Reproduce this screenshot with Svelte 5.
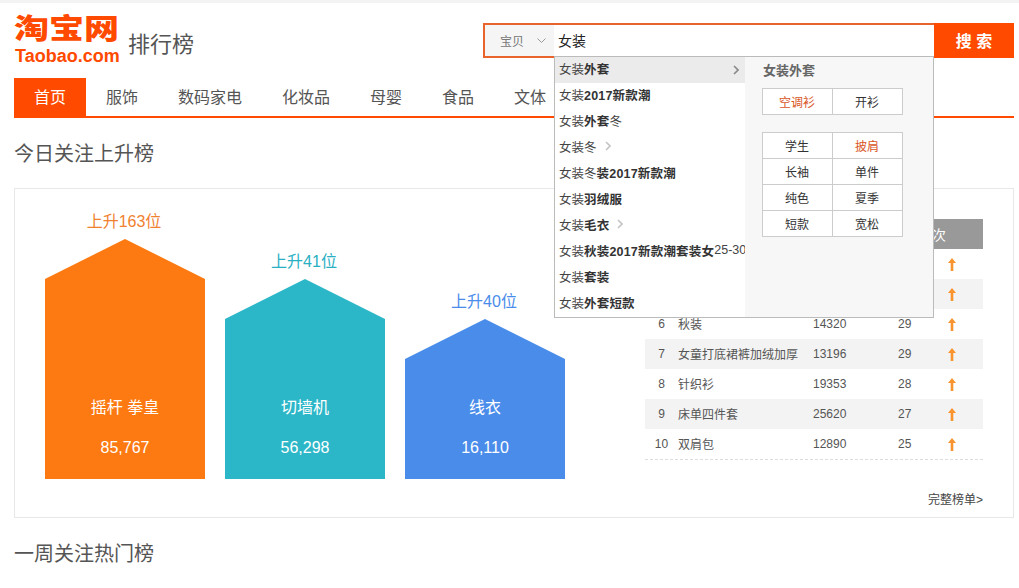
<script>
  const bars = [
    { rise: '上升163位', name: '摇杆 拳皇', value: '85,767', h: 240, bg: '#fd7a12', fg: '#f0812f' },
    { rise: '上升41位', name: '切墙机', value: '56,298', h: 200, bg: '#2cb7c9', fg: '#2ab0c3' },
    { rise: '上升40位', name: '线衣', value: '16,110', h: 160, bg: '#4a8cea', fg: '#4a8cea' }
  ];
  const rows = [
    { rank: '', name: '', num: '', up: '' },
    { rank: '', name: '', num: '', up: '' },
    { rank: 6, name: '秋装', num: '14320', up: 29 },
    { rank: 7, name: '女童打底裙裤加绒加厚', num: '13196', up: 29 },
    { rank: 8, name: '针织衫', num: '19353', up: 28 },
    { rank: 9, name: '床单四件套', num: '25620', up: 27 },
    { rank: 10, name: '双肩包', num: '12890', up: 25 }
  ];
  const nav = ['首页', '服饰', '数码家电', '化妆品', '母婴', '食品', '文体'];
  const sugg = [
    { a: '女装', b: '外套', c: '', hot: true },
    { a: '女装', b: '2017新款潮', c: '' },
    { a: '女装', b: '外套', c: '冬' },
    { a: '女装', b: '', c: '冬', more: true },
    { a: '女装', b: '', c: '冬', d: '装2017新款潮' },
    { a: '女装', b: '羽绒服', c: '' },
    { a: '女装', b: '毛衣', c: '', more: true },
    { a: '女装', b: '秋装2017新款潮套装女', c: '25-30' },
    { a: '女装', b: '套装', c: '' },
    { a: '女装', b: '外套短款', c: '' }
  ];
  const g1 = [{ t: '空调衫', on: true }, { t: '开衫' }];
  const g2 = [
    { t: '学生' }, { t: '披肩', on: true }, { t: '长袖' }, { t: '单件' },
    { t: '纯色' }, { t: '夏季' }, { t: '短款' }, { t: '宽松' }
  ];
</script>

<div class="page">
  <header class="head">
    <div class="logo">
      <div class="logo-cn">淘宝网</div>
      <div class="logo-en">Taobao.com</div>
    </div>
    <div class="sub">排行榜</div>
    <div class="search">
      <div class="box">
        <div class="select">
          <span>宝贝</span>
          <svg width="9" height="5" viewBox="0 0 9 5"><path d="M0.5 0.5 L4.5 4.5 L8.5 0.5" fill="none" stroke="#999" /></svg>
        </div>
        <div class="input">女装</div>
      </div>
      <button class="go">搜 索</button>
      <div class="drop">
        <ul class="list">
          {#each sugg as s}
            <li class:hot={s.hot}>
              <span>{s.a}</span>{#if s.c && !s.b}<span>{s.c}</span>{/if}{#if s.b}<b>{s.b}</b>{/if}{#if s.c && s.b}<span>{s.c}</span>{/if}{#if s.d}<b>{s.d}</b>{/if}
              {#if s.more}
                <svg class="chev" width="6" height="10" viewBox="0 0 6 10"><path d="M1 1 L5 5 L1 9" fill="none" stroke="#c4c4c4" stroke-width="1.6" /></svg>
              {/if}
              {#if s.hot}
                <svg class="chev end" width="6" height="10" viewBox="0 0 6 10"><path d="M1 1 L5 5 L1 9" fill="none" stroke="#888" stroke-width="1.6" /></svg>
              {/if}
            </li>
          {/each}
        </ul>
        <div class="side">
          <div class="side-t">女装外套</div>
          <div class="cells first">
            {#each g1 as c}<div class="cell" class:on={c.on}>{c.t}</div>{/each}
          </div>
          <div class="cells second">
            {#each g2 as c}<div class="cell" class:on={c.on}>{c.t}</div>{/each}
          </div>
        </div>
      </div>
    </div>
  </header>

  <nav class="nav">
    {#each nav as n, i}
      <a class="tab" class:active={i === 0} href="#top">{n}</a>
    {/each}
  </nav>

  <h2 class="title">今日关注上升榜</h2>

  <section class="card">
    <div class="bars">
      {#each bars as b}
        <div class="col">
          <div class="rise" style="color:{b.fg}">{b.rise}</div>
          <div class="bar" style="height:{b.h}px;background:{b.bg}">
            <div>{b.name}</div>
            <div>{b.value}</div>
          </div>
        </div>
      {/each}
    </div>
    <div class="rank">
      <div class="row thead"><span class="hcell">名次</span></div>
      {#each rows as r, i}
        <div class="row" class:alt={i % 2 === 1}>
          <span class="c-rank">{r.rank}</span>
          <span class="c-name">{r.name}</span>
          <span>{r.num}</span>
          <span>{r.up}</span>
          <span class="c-arrow">
            <svg width="8" height="13" viewBox="0 0 8 13"><path d="M4 0 L8 5 L5.3 5 L5.3 13 L2.7 13 L2.7 5 L0 5 Z" fill="#f9932e" /></svg>
          </span>
        </div>
      {/each}
      <div class="more">完整榜单&gt;</div>
    </div>
  </section>

  <h2 class="title">一周关注热门榜</h2>
</div>

<style>
  :global(body) {
    margin: 0;
    background: #fff;
  }
  .page {
    width: 1000px;
    height: 585px;
    overflow: hidden;
    padding: 0 5px 0 14px;
    border-top: 3px solid #f3f3f3;
    font-family: "Liberation Sans", "Noto Sans CJK SC", sans-serif;
    color: #555;
  }
  .head {
    display: flex;
    align-items: flex-start;
    height: 75px;
  }
  .logo {
    width: 115px;
    margin-right: -1px;
    color: #ff4a00;
    margin-top: 14px;
  }
  .logo-cn {
    font-size: 35px;
    line-height: 30px;
    font-weight: 900;
    width: 106px;
    white-space: nowrap;
    transform: scaleY(0.82);
    transform-origin: center top;
  }
  .logo-en {
    font-size: 18px;
    line-height: 18px;
    font-weight: bold;
    padding-left: 1px;
    white-space: nowrap;
  }
  .sub {
    font-size: 22px;
    line-height: 30px;
    margin-top: 27px;
    color: #555;
  }
  .search {
    position: relative;
    display: flex;
    width: 531px;
    height: 35px;
    margin: 20px 0 0 auto;
  }
  .box {
    display: flex;
    width: 451px;
    box-sizing: border-box;
    border: 2px solid #e8642c;
    border-right: 0;
  }
  .select {
    display: flex;
    align-items: center;
    width: 69px;
    box-sizing: border-box;
    padding-left: 15px;
    gap: 13px;
    background: #f5f5f5;
    font-size: 12px;
    color: #777;
  }
  .input {
    flex: 1;
    padding-left: 4px;
    font-size: 14px;
    line-height: 33px;
    color: #222;
  }
  .go {
    width: 80px;
    height: 35px;
    border: 0;
    padding: 0 0 2px;
    background: #ff4a00;
    color: #fff;
    font: bold 16px "Liberation Sans", "Noto Sans CJK SC", sans-serif;
  }
  .drop {
    position: absolute;
    left: 71px;
    top: 33px;
    z-index: 2;
    display: flex;
    width: 380px;
    height: 262px;
    box-sizing: border-box;
    border: 1px solid #bbb;
    background: #fff;
  }
  .list {
    width: 190px;
    margin: 0;
    padding: 0;
    list-style: none;
    overflow: hidden;
  }
  .list li {
    position: relative;
    display: flex;
    align-items: center;
    height: 26px;
    box-sizing: border-box;
    padding: 0 0 4px 4px;
    font-size: 12.5px;
    color: #444;
    white-space: nowrap;
  }
  .list li.hot {
    background: #ebebeb;
  }
  .list b {
    font-weight: bold;
    color: #333;
    letter-spacing: 0.2px;
  }
  .chev {
    margin-left: 8px;
  }
  .chev.end {
    position: absolute;
    right: 6px;
    top: 8px;
  }
  .side {
    flex: 1;
    padding-left: 17px;
    background: #f7f7f7;
  }
  .side-t {
    padding-left: 1px;
    font-size: 13px;
    line-height: 26px;
    height: 26px;
    padding-top: 1px;
    box-sizing: border-box;
    font-weight: bold;
    color: #666;
  }
  .cells {
    display: grid;
    grid-template-columns: 69px 69px;
    grid-auto-rows: 25px;
    gap: 1px;
    width: 139px;
    padding: 1px;
    background: #ccc;
  }
  .first {
    margin-top: 5px;
  }
  .second {
    margin-top: 17px;
  }
  .cell {
    box-sizing: border-box;
    padding: 4px 1px 0 0;
    background: #fff;
    font-size: 12px;
    line-height: 21px;
    text-align: center;
    color: #333;
  }
  .cell.on {
    color: #d9541e;
  }
  .nav {
    display: flex;
    height: 38px;
    border-bottom: 2px solid #ff4a00;
  }
  .tab {
    box-sizing: border-box;
    padding: 2px 20px 0;
    font-size: 16px;
    line-height: 36px;
    color: #555;
    text-decoration: none;
  }
  .tab.active {
    background: #ff4a00;
    color: #fff;
  }
  .title {
    margin: 0;
    height: 70px;
    box-sizing: border-box;
    padding-top: 2px;
    font-size: 20px;
    line-height: 68px;
    font-weight: normal;
    color: #555;
  }
  .card {
    display: flex;
    height: 330px;
    box-sizing: border-box;
    border: 1px solid #e8e8e8;
    padding: 22px 30px 0;
  }
  .bars {
    display: flex;
    align-items: flex-end;
    gap: 20px;
    height: 268px;
  }
  .col {
    width: 160px;
    text-align: center;
  }
  .rise {
    font-size: 16px;
    line-height: 20px;
    margin-bottom: 7px;
    padding-right: 2px;
  }
  .bar {
    display: flex;
    flex-direction: column;
    justify-content: flex-end;
    gap: 16px;
    padding-bottom: 19px;
    box-sizing: border-box;
    font-size: 16px;
    line-height: 24px;
    color: #fff;
    clip-path: polygon(50% 0, 100% 40px, 100% 100%, 0 100%, 0 40px);
  }
  .rank {
    width: 338px;
    margin: 8px 0 0 80px;
    font-size: 12px;
    color: #555;
  }
  .row {
    display: grid;
    grid-template-columns: 33px 135px 85px 34px 40px 11px;
    align-items: center;
    height: 30px;
  }
  .row.alt {
    background: #f3f3f3;
  }
  .thead {
    background: #999;
    color: #fff;
    font-size: 14px;
  }
  .hcell {
    grid-column: 4 / 6;
    text-align: right;
    padding-right: 26px;
  }
  .c-rank {
    text-align: center;
  }
  .c-name {
    padding-bottom: 2px;
  }
  .c-arrow {
    display: flex;
    justify-content: center;
    padding-top: 1px;
  }
  .more {
    border-top: 1px dashed #ddd;
    padding-top: 31px;
    line-height: 18px;
    text-align: right;
    color: #444;
  }
</style>
